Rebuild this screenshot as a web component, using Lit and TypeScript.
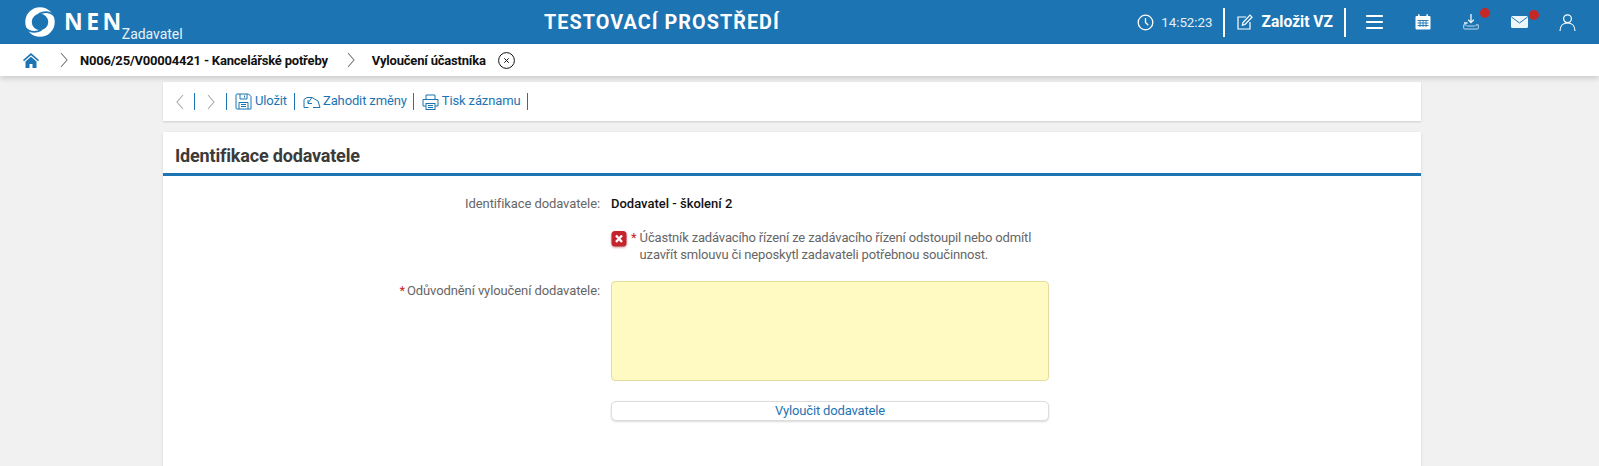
import { LitElement, html, css, svg } from "lit";
import { customElement } from "lit/decorators.js";

const chevL = svg`<path d="M8 1 2 8l6 7" fill="none" stroke="currentColor" stroke-width="1.1"/>`;
const chevR = svg`<path d="M2 1l6 7-6 7" fill="none" stroke="currentColor" stroke-width="1.1"/>`;

@customElement("app-root")
export class AppRoot extends LitElement {
  static styles = css`
    :host { display: block; height: 466px; overflow: hidden; background: #f1f1f1; font-family: Roboto, "Liberation Sans", sans-serif; font-size: 13px; color: #555; }
    svg { display: block; flex: none; }
    .top { height: 44px; background: #1d74b3; color: #fff; display: grid; grid-template-columns: 521px auto 1fr; align-items: center; padding: 0 23px; }
    .brand { display: flex; align-items: flex-start; height: 44px; margin-left: 2px; }
    .logo { margin-top: 7px; }
    .nen { font-size: 23px; font-weight: 700; letter-spacing: 3.5px; line-height: 24px; margin: 9px 0 0 9px; font-family: "Open Sans", Roboto, sans-serif; }
    .role { font-size: 14px; line-height: 16px; margin: 26px 0 0 -3px; color: #e9f2f9; letter-spacing: -.03px; }
    .env { font-size: 19.8px; font-weight: 700; letter-spacing: 1.05px; }
    .tools { display: flex; align-items: center; justify-content: flex-end; height: 44px; }
    .clock { font-size: 13.3px; margin: 0 10px 0 7px; color: #e4eff7; }
    .vr { width: 2px; height: 29px; background: #fff; }
    .create { display: flex; align-items: center; gap: 9px; font-size: 15.6px; font-weight: 700; margin: 0 11px 0 12px; }
    .ico { position: relative; margin-left: 32px; }
    .ico.menu { margin-left: 20px; }
    .ico.user { margin-left: 31px; }
    .dot { position: absolute; width: 10px; height: 10px; border-radius: 50%; background: #c62828; top: -6px; right: -11px; }
    .crumbs { height: 32px; background: #fff; display: flex; align-items: center; padding-left: 23px; font-size: 13px; font-weight: 700; color: #111; box-shadow: 0 2px 6px rgba(0,0,0,.18); position: relative; letter-spacing: -.2px; }
    .crumbs .sep { color: #777; margin: 0 11px 0 20px; }
    .crumbs .sep.b { margin: 0 16px 0 18px; }
    .crumbs .close { margin-left: 12px; }
    .wrap { padding: 6px 178px 0 163px; }
    .bar { height: 39px; background: #fff; box-shadow: 0 1px 2px rgba(0,0,0,.15); display: flex; align-items: center; padding-left: 12px; color: #1d74b3; font-size: 13px; letter-spacing: -.13px; }
    .bar .v { width: 1px; height: 17px; background: #1d74b3; }
    .navb { color: #a9a9a9; margin: 0 9px 0 0; }
    .navb.n { margin: 0 10px 0 11px; }
    .act { display: flex; align-items: center; gap: 3px; margin: 0 7px 0 8px; }
    .act.z { gap: 2px; margin-right: 6px; }
    .act span { position: relative; top: -1px; }
    .card { margin-top: 11px; background: #fff; height: 340px; box-shadow: 0 1px 3px rgba(0,0,0,.12); }
    .card h2 { margin: 0; height: 41px; box-sizing: content-box; border-bottom: 3px solid #1d74b3; padding: 0 12px; font-size: 18px; font-weight: 700; color: #3a3a3a; line-height: 47px; letter-spacing: -.18px; }
    .form { display: grid; grid-template-columns: 437px 438px; column-gap: 11px; padding-top: 20px; line-height: 16px; }
    .label { text-align: right; color: #666; letter-spacing: -.1px; }
    .value { color: #111; font-weight: 500; }
    .req { color: #c62828; }
    .label .req { margin-right: 2px; }
    .row2 { grid-column: 2; margin-top: 18px; display: flex; align-items: flex-start; }
    .row2 .txt { color: #666; line-height: 16.5px; width: 405px; margin-left: 3px; letter-spacing: -.16px; }
    .row2 .req { margin-left: 4px; }
    .err { filter: drop-shadow(0 1px 1px rgba(120,0,0,.4)); }
    .lab3 { margin-top: 20px; }
    .ta { margin-top: 18px; height: 98px; background: #fff9c2; border: 1px solid #e4dc9c; border-radius: 4px; }
    .btn { grid-column: 2; margin-top: 20px; height: 18px; border: 1px solid #ddd; border-radius: 5px; box-shadow: 0 1px 2px rgba(0,0,0,.15); text-align: center; line-height: 18px; color: #1d74b3; font-size: 13px; background: #fff; letter-spacing: -.16px; }
  `;

  render() {
    return html`
      <div class="top">
        <div class="brand">
          <svg class="logo" width="30" height="30" viewBox="0 0 30 30">
            <circle cx="15" cy="15" r="11.500" fill="none" stroke="#fff" stroke-width="6.500"/>
            <path d="M30 9.500C25.500 4.500 19 4.500 13.500 7" fill="none" stroke="#1d74b3" stroke-width="1.800"/>
            <path d="M0 20.500C4.500 25.500 11 25.500 16.500 23" fill="none" stroke="#1d74b3" stroke-width="1.800"/>
          </svg>
          <span class="nen">NEN</span><span class="role">Zadavatel</span>
        </div>
        <div class="env">TESTOVACÍ PROSTŘEDÍ</div>
        <div class="tools">
          <svg width="17" height="17" viewBox="0 0 17 17" fill="none" stroke="#fff" stroke-width="1.3"><circle cx="8.500" cy="8.500" r="7.300"/><path d="M8.500 4v4.500l2.800 2.800"/></svg>
          <span class="clock">14:52:23</span>
          <div class="vr"></div>
          <div class="create">
            <svg width="16" height="16" viewBox="0 0 16 16" fill="none" stroke="#fff" stroke-width="1.200"><path d="M9 3H1v12h12V8"/><path d="M6 8.500 13 1.200l2 2-7 7.300-2.600.6z"/></svg>
            <span>Založit VZ</span>
          </div>
          <div class="vr"></div>
          <div class="ico menu"><svg width="17" height="14" viewBox="0 0 17 14" fill="#fff"><rect width="17" height="2" rx=".8"/><rect y="6" width="17" height="2" rx=".8"/><rect y="12" width="17" height="2" rx=".8"/></svg></div>
          <div class="ico"><svg width="16" height="16" viewBox="0 0 16 16"><rect x=".5" y="2" width="15" height="13.500" rx="1" fill="#fff"/><rect x="3" y=".3" width="1.600" height="3" fill="#fff"/><rect x="11.400" y=".3" width="1.600" height="3" fill="#fff"/><path d="M2.500 6.500h11M2.500 9h11M2.500 11.500h11M5 6v7M8 6v7M11 6v7" stroke="#1d74b3" stroke-width=".9"/></svg></div>
          <div class="ico"><svg width="16" height="16" viewBox="0 0 16 16" fill="none" stroke-width="1.300"><path d="M8 0v8.500M5.200 5.800 8 8.600l2.800-2.800M4.500 9H1" stroke="#f2f7fb"/><path d="M3 10.800c0 1 .8 1.200 1.500 1.200h7c.7 0 1.500-.2 1.500-1.200h2.300v3.400a.8.800 0 0 1-.8.800h-13a.8.800 0 0 1-.8-.8v-3.400z" stroke="#c5dbed" stroke-width="1"/></svg><i class="dot"></i></div>
          <div class="ico"><svg width="17" height="12" viewBox="0 0 17 12"><rect width="17" height="12" rx="1.500" fill="#eef5fa"/><path d="M.5 1 8.500 7l8-6" fill="none" stroke="#1d74b3" stroke-width="1"/></svg><i class="dot"></i></div>
          <div class="ico user"><svg width="17" height="17" viewBox="0 0 17 17" fill="none" stroke="#fff" stroke-width="1.200"><circle cx="8.500" cy="4.700" r="3.900"/><path d="M1 17c0-5 3-8 7.500-8s7.500 3 7.500 8"/></svg></div>
        </div>
      </div>
      <div class="crumbs">
        <svg width="16" height="15" viewBox="0 0 16 15"><path d="M8 0 0 7l1 1.200L8 2.200l7 6L16 7z" fill="#1d74b3"/><path d="M2.500 8.500 8 3.800l5.500 4.700V15H9.500v-4h-3v4h-4z" fill="#1d74b3"/></svg>
        <svg class="sep" width="10" height="16" viewBox="0 0 10 16">${chevR}</svg>
        <span>N006/25/V00004421 - Kancelářské potřeby</span>
        <svg class="sep b" width="10" height="16" viewBox="0 0 10 16">${chevR}</svg>
        <span>Vyloučení účastníka</span>
        <svg class="close" width="17" height="17" viewBox="0 0 17 17" fill="none" stroke="#111"><circle cx="8.500" cy="8.500" r="7.900"/><path d="M6.300 6.300l4.400 4.400M10.700 6.300l-4.400 4.400"/></svg>
      </div>
      <div class="wrap">
        <div class="bar">
          <svg class="navb" width="10" height="16" viewBox="0 0 10 16">${chevL}</svg>
          <div class="v"></div>
          <svg class="navb n" width="10" height="16" viewBox="0 0 10 16">${chevR}</svg>
          <div class="v"></div>
          <div class="act">
            <svg width="17" height="17" viewBox="0 0 17 17" fill="none" stroke="#1d74b3"><path d="M2 1h11.500L16 3.500V16H2a1 1 0 0 1-1-1V2a1 1 0 0 1 1-1z"/><path d="M5 1v5h7V1M9.500 2.500v2M4 16v-6.500h9V16M6 11.500h5M6 13.500h5"/></svg>
            <span>Uložit</span>
          </div>
          <div class="v"></div>
          <div class="act z">
            <svg width="18" height="14" viewBox="0 0 18 14" fill="none" stroke="#1d74b3"><path d="M5.500 12.500H1V4.500l3-2h5"/><path d="M17 12.500 15 6 9 2.500 5 8M5 5v3.500h4M10 12.500h7"/></svg>
            <span>Zahodit změny</span>
          </div>
          <div class="v"></div>
          <div class="act">
            <svg width="17" height="16" viewBox="0 0 17 16" fill="none" stroke="#1d74b3"><path d="M4 5V1h9v4M4 12H1V5.500h15V12h-3"/><rect x="4" y="9.500" width="9" height="6"/><path d="M6 11.500h5M6 13.500h5"/></svg>
            <span>Tisk záznamu</span>
          </div>
          <div class="v"></div>
        </div>
        <div class="card">
          <h2>Identifikace dodavatele</h2>
          <div class="form">
            <div class="label">Identifikace dodavatele:</div>
            <div class="value">Dodavatel - školení 2</div>
            <div class="row2">
              <svg class="err" width="16" height="18" viewBox="0 0 16 18"><rect x=".5" y="1" width="15" height="15.500" rx="3.500" fill="#c5242c"/><path d="M5 5.500l6 6.500M11 5.500 5 12" stroke="#fff" stroke-width="2.400"/></svg>
              <span class="req">*</span>
              <div class="txt">Účastník zadávacího řízení ze zadávacího řízení odstoupil nebo odmítl uzavřít smlouvu či neposkytl zadavateli potřebnou součinnost.</div>
            </div>
            <div class="label lab3"><span class="req">*</span>Odůvodnění vyloučení dodavatele:</div>
            <div class="ta"></div>
            <div class="btn">Vyloučit dodavatele</div>
          </div>
        </div>
      </div>
    `;
  }
}
